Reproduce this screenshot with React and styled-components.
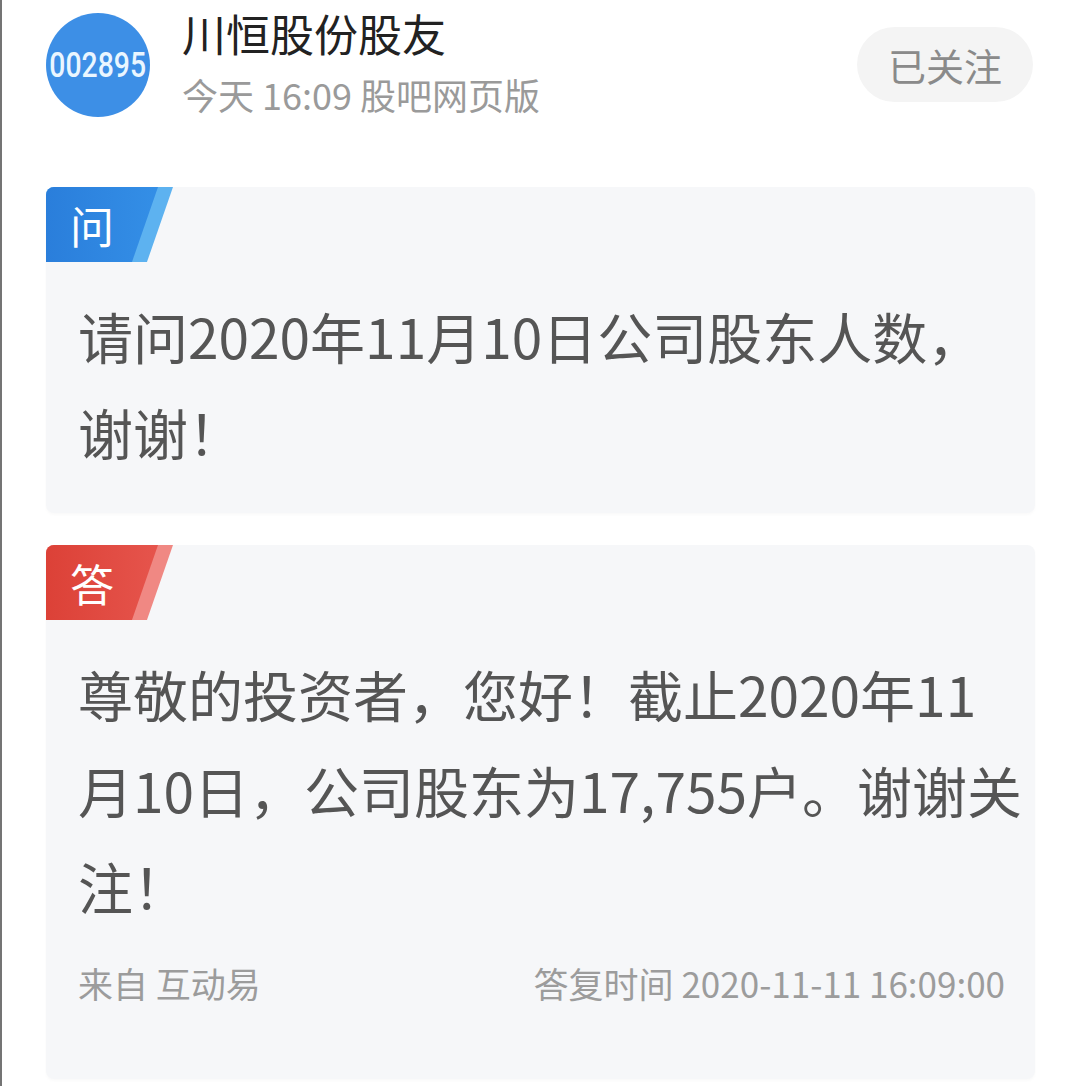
import React from "react";
import styled, { createGlobalStyle } from "styled-components";

const Global = createGlobalStyle`
  html, body { margin: 0; padding: 0; background: #ffffff; }
  body { font-family: "Noto Sans CJK SC", "Noto Sans", sans-serif; }
`;

const Page = styled.div`
  box-sizing: border-box;
  width: 1080px;
  min-height: 1086px;
  border-left: 2px solid #747474;
  padding: 7px 45px 0 44px;
  background: #ffffff;
`;

const Header = styled.header`
  display: flex;
  align-items: flex-start;
  margin-bottom: 70px;
`;

const Avatar = styled.div`
  flex: none;
  width: 104px;
  height: 104px;
  margin-top: 6px;
  border-radius: 50%;
  background: #3d8fe6;
  display: flex;
  align-items: center;
  justify-content: center;
  overflow: hidden;
`;

const AvatarCode = styled.span`
  font-family: Roboto, "Noto Sans", sans-serif;
  font-weight: 500;
  font-size: 35px;
  line-height: 1;
  color: #eaf6ff;
  transform: scaleX(0.81);
  white-space: nowrap;
`;

const Info = styled.div`
  flex: 1;
  margin-left: 32px;
  display: flex;
  flex-direction: column;
`;

const Name = styled.div`
  font-size: 44px;
  line-height: 52px;
  color: #222222;
`;

const Meta = styled.div`
  margin-top: 13px;
  font-size: 36px;
  line-height: 44px;
  color: #9a9a9a;
`;

const FollowButton = styled.button`
  flex: none;
  margin-top: 20px;
  margin-right: 2px;
  width: 176px;
  height: 75px;
  border: none;
  border-radius: 38px;
  background: #f4f4f4;
  color: #8a8a8a;
  font-family: "Noto Sans CJK SC", sans-serif;
  font-size: 38px;
  line-height: 1;
  padding: 0;
`;

const Card = styled.section`
  background: #f6f7f9;
  border-radius: 8px;
  box-shadow: 0 2px 3px rgba(0, 0, 0, 0.025);
  margin-bottom: ${(p) => p.$gap || 0}px;
  padding-bottom: ${(p) => p.$pb}px;
`;

const Tag = styled.div`
  position: relative;
  width: 127px;
  height: 75px;
  border-top-left-radius: 8px;
  clip-path: polygon(0 0, 100% 0, 79.5% 100%, 0 100%);
  background: ${(p) => p.$stripe};
  display: flex;
  align-items: center;
  padding-left: 24px;
  box-sizing: border-box;

  &::before {
    content: "";
    position: absolute;
    inset: 0;
    border-top-left-radius: 8px;
    background: ${(p) => p.$main};
    clip-path: polygon(0 0, 88.2% 0, 67.7% 100%, 0 100%);
  }
`;

const TagText = styled.span`
  position: relative;
  font-size: 44px;
  line-height: 1;
  color: #ffffff;
`;

const Body = styled.p`
  margin: 25px 0 0;
  padding: 0 14px 0 32px;
  font-size: 55px;
  line-height: 96px;
  color: #555555;
  white-space: nowrap;
`;

const Footer = styled.div`
  margin-top: 25px;
  padding: 0 30px 0 32px;
  display: flex;
  justify-content: space-between;
  font-size: 35px;
  line-height: 50px;
  color: #9c9c9c;
`;

export default function App() {
  return (
    <>
      <Global />
      <Page>
        <Header>
          <Avatar>
            <AvatarCode>002895</AvatarCode>
          </Avatar>
          <Info>
            <Name>川恒股份股友</Name>
            <Meta>今天 16:09 股吧网页版</Meta>
          </Info>
          <FollowButton>已关注</FollowButton>
        </Header>

        <Card $gap={32} $pb={34}>
          <Tag
            $main="linear-gradient(90deg, #2a7edb 0%, #3591e8 100%)"
            $stripe="#5db2f0"
          >
            <TagText>问</TagText>
          </Tag>
          <Body>
            请问2020年11月10日公司股东人数，
            <br />
            谢谢！
          </Body>
        </Card>

        <Card $pb={71}>
          <Tag
            $main="linear-gradient(90deg, #dc4137 0%, #e7574f 100%)"
            $stripe="#f08883"
          >
            <TagText>答</TagText>
          </Tag>
          <Body>
            尊敬的投资者，您好！截止2020年11
            <br />
            月10日，公司股东为17,755户。谢谢关
            <br />
            注！
          </Body>
          <Footer>
            <span>来自 互动易</span>
            <span>答复时间 2020-11-11 16:09:00</span>
          </Footer>
        </Card>
      </Page>
    </>
  );
}
